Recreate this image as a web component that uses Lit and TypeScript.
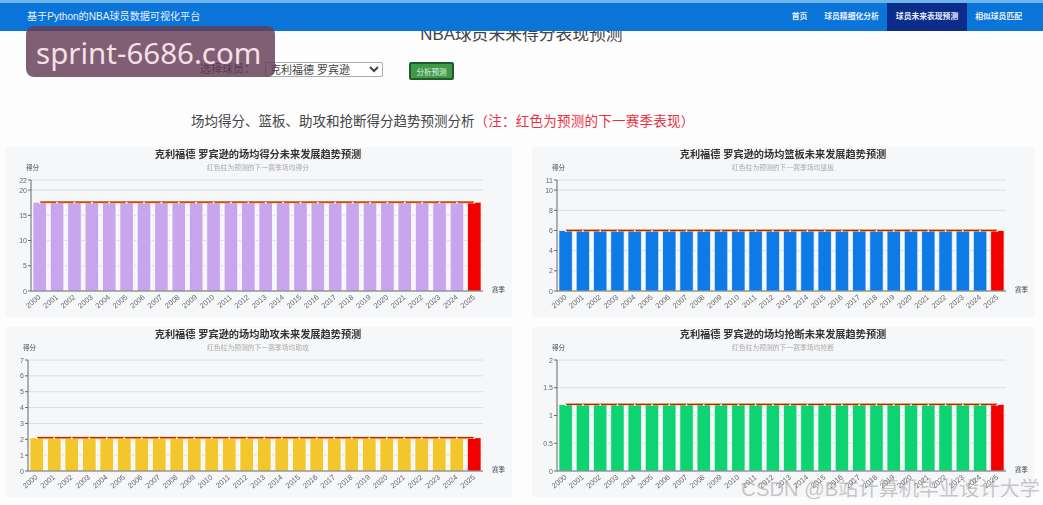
import { LitElement, html, css, svg } from 'lit';
import { customElement, property } from 'lit/decorators.js';

const PLAYER = '克利福德 罗宾逊';
const YEARS = Array.from({ length: 26 }, (_, i) => 2000 + i);
const NAV = ['首页', '球员精细化分析', '球员未来表现预测', '相似球员匹配'];

interface ChartConfig {
  stat: string;
  color: string;
  value: number;
  max: number;
  ticks: number[];
  axisLeft: number;
  axisRight: number;
  titleX: number;
}

const AXIS_BOTTOM = 144;
const AXIS_HEIGHT = 111;

const CHARTS: ChartConfig[] = [
  { stat: '得分', color: '#c9a5ee', value: 17.6, max: 22, ticks: [0, 5, 10, 15, 20, 22], axisLeft: 26, axisRight: 478, titleX: 253 },
  { stat: '篮板', color: '#0e7ae6', value: 6, max: 11, ticks: [0, 2, 4, 6, 8, 10, 11], axisLeft: 25, axisRight: 474, titleX: 251 },
  { stat: '助攻', color: '#f4c62d', value: 2.1, max: 7, ticks: [0, 1, 2, 3, 4, 5, 6, 7], axisLeft: 23, axisRight: 478, titleX: 253 },
  { stat: '抢断', color: '#0dd372', value: 1.2, max: 2, ticks: [0, 0.5, 1, 1.5, 2], axisLeft: 25, axisRight: 474, titleX: 251 },
];

@customElement('trend-chart')
export class TrendChart extends LitElement {
  @property({ type: Object }) config!: ChartConfig;

  render() {
    const c = this.config;
    const band = (c.axisRight - c.axisLeft) / YEARS.length;
    const barW = band * 0.78;
    const yOf = (v: number) => AXIS_BOTTOM - (v / c.max) * AXIS_HEIGHT;
    const cx = (i: number) => c.axisLeft + band * (i + 0.5);
    const valueY = yOf(c.value);

    return html`
      <svg width="100%" height="170" role="img" aria-label="${c.stat}趋势">
        <text class="title" x=${c.titleX} y="11" text-anchor="middle">${PLAYER}的场均${c.stat}未来发展趋势预测</text>
        <text class="sub" x=${c.titleX} y="23" text-anchor="middle">红色柱为预测的下一赛季场均${c.stat}</text>
        <text class="name" x=${c.axisLeft - 5} y="23">得分</text>
        <text class="name" x=${c.axisRight + 9} y=${AXIS_BOTTOM + 1}>赛季</text>

        ${c.ticks.map((t) => svg`
          ${t > 0 ? svg`<line class="grid" x1=${c.axisLeft} x2=${c.axisRight} y1=${yOf(t)} y2=${yOf(t)}></line>` : ''}
          <line class="axis" x1=${c.axisLeft - 3} x2=${c.axisLeft} y1=${yOf(t)} y2=${yOf(t)}></line>
          <text class="tick" x=${c.axisLeft - 4} y=${yOf(t) + 2.5} text-anchor="end">${t}</text>
        `)}

        ${YEARS.map((year, i) => svg`
          <rect class="bar" x=${cx(i) - barW / 2} y=${valueY} width=${barW} height=${AXIS_BOTTOM - valueY}
            fill=${i === YEARS.length - 1 ? '#f20000' : c.color}></rect>
          <text class="year" text-anchor="end"
            transform="translate(${cx(i) + 1.5} ${AXIS_BOTTOM + 7}) rotate(-40)">${year}</text>
        `)}

        <line class="glow" x1=${cx(0)} x2=${cx(25)} y1=${valueY} y2=${valueY}></line>
        <line class="trend" x1=${cx(0)} x2=${cx(25)} y1=${valueY} y2=${valueY}></line>
        ${YEARS.map((_, i) => svg`<circle cx=${cx(i)} cy=${valueY + 0.5} r="0.9" fill="#fff"></circle>`)}

        <line class="axis" x1=${c.axisLeft} x2=${c.axisLeft} y1=${AXIS_BOTTOM - AXIS_HEIGHT} y2=${AXIS_BOTTOM}></line>
        <line class="axis" x1=${c.axisLeft} x2=${c.axisRight} y1=${AXIS_BOTTOM} y2=${AXIS_BOTTOM}></line>
      </svg>
    `;
  }

  static styles = css`
    :host { display: block; background: #f6f7f9; }
    svg { display: block; filter: blur(0.35px); }
    text { font-family: 'Liberation Sans', 'Noto Sans CJK SC', sans-serif; }
    .title { font-size: 10.2px; font-weight: 700; fill: #333; }
    .sub { font-size: 6.8px; fill: #aaa; }
    .name { font-size: 6.5px; fill: #444; }
    .tick { font-size: 7px; fill: #666; }
    .year { font-size: 7.5px; fill: #666; }
    .bar { stroke: #fff; stroke-opacity: 0.75; stroke-width: 1; }
    .grid { stroke: #dedede; stroke-width: 1; }
    .axis { stroke: #666; stroke-width: 1; }
    .glow { stroke: #f6b73c; stroke-width: 2.4; opacity: 0.8; }
    .trend { stroke: #b3261e; stroke-width: 1.2; }
  `;
}

@customElement('app-root')
export class AppRoot extends LitElement {
  render() {
    return html`
      <header class="topbar">
        <div class="brand">基于Python的NBA球员数据可视化平台</div>
        <nav class="nav">
          ${NAV.map((item, i) => html`<a class=${i === 2 ? 'active' : ''}>${item}</a>`)}
        </nav>
      </header>

      <main class="page">
        <h1 class="page-title">NBA球员未来得分表现预测</h1>
        <div class="picker">
          <label class="picker-label">选择球员：</label>
          <select class="picker-select"><option>${PLAYER}</option></select>
          <button class="picker-btn">分析预测</button>
        </div>
        <h2 class="section">场均得分、篮板、助攻和抢断得分趋势预测分析<span class="note">（注：红色为预测的下一赛季表现）</span></h2>
        <div class="charts">
          ${CHARTS.map((c) => html`<trend-chart .config=${c}></trend-chart>`)}
        </div>
      </main>

      <div class="stamp">sprint-6686.com</div>
      <div class="credit">CSDN @B站计算机毕业设计大学</div>
    `;
  }

  static styles = css`
    :host {
      display: block;
      position: relative;
      width: 1043px;
      height: 505px;
      overflow: hidden;
      background: #fdfdfe;
      font-family: 'Liberation Sans', 'Noto Sans CJK SC', sans-serif;
    }
    .topbar {
      position: absolute;
      inset: 0 0 auto 0;
      z-index: 2;
      height: 28px;
      border-top: 3px solid #6db5ea;
      background: #0a74d9;
      display: flex;
      align-items: stretch;
      justify-content: space-between;
      padding: 0 12.5px 0 27px;
      color: #fff;
    }
    .brand { font-size: 10.1px; line-height: 28px; color: #e8f2fb; }
    .nav { display: flex; }
    .nav a {
      font-size: 7.8px;
      font-weight: 700;
      line-height: 28px;
      padding: 0 8.5px;
      color: #e6f1fb;
    }
    .nav a.active { background: #0c2c8c; }
    .page { padding-top: 25px; }
    .page-title {
      margin: 0;
      font-size: 16.8px;
      font-weight: 400;
      line-height: 20px;
      color: #444;
      text-align: center;
    }
    .picker {
      display: flex;
      align-items: flex-start;
      margin-top: 17px;
      padding-left: 200px;
      height: 17px;
    }
    .picker-label { font-size: 11px; line-height: 15px; color: #333; width: 65px; }
    .picker-select {
      width: 118px;
      height: 15px;
      padding: 0;
      font-size: 11px;
      font-family: inherit;
      color: #444;
      background: #fff;
      border: 1px solid #aaa;
      border-radius: 2px;
    }
    .picker-btn {
      margin-left: 26px;
      width: 45px;
      height: 18px;
      padding: 0;
      font-size: 7.5px;
      font-family: inherit;
      color: #e4f3e4;
      background: #3f9a46;
      border: 2px solid #25592c;
      border-radius: 2px;
    }
    .section {
      margin: 33px 0 0;
      padding-left: 191px;
      font-size: 13.5px;
      font-weight: 400;
      line-height: 20px;
      color: #444;
    }
    .note { color: #e8313f; letter-spacing: 0.25px; }
    .charts {
      display: grid;
      grid-template-columns: 507px 503px;
      grid-auto-rows: 170px;
      column-gap: 20px;
      row-gap: 10px;
      margin-top: 15px;
      padding-left: 5px;
    }
    .stamp {
      position: absolute;
      z-index: 3;
      left: 26px;
      top: 26px;
      width: 249px;
      height: 51px;
      box-sizing: border-box;
      padding-left: 10px;
      border-radius: 8px;
      background: rgba(100, 60, 85, 0.82);
      color: #f6dfe6;
      font-family: 'Noto Sans', sans-serif;
      font-size: 29.5px;
      line-height: 53px;
    }
    .credit {
      position: absolute;
      z-index: 3;
      right: 3px;
      bottom: 4px;
      font-size: 20.2px;
      line-height: 24px;
      color: rgba(150, 150, 150, 0.5);
    }
  `;
}
